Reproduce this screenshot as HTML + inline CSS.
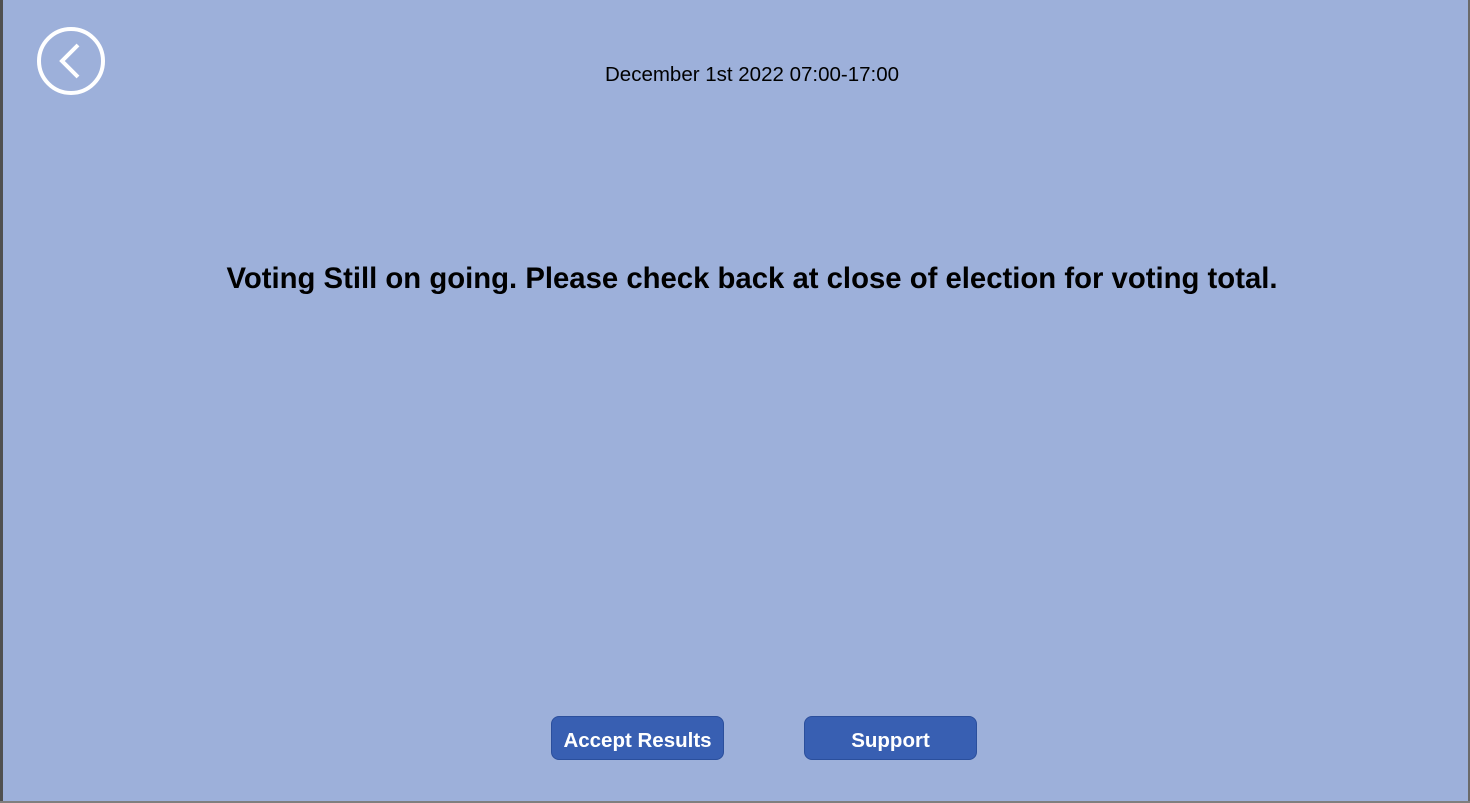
<!DOCTYPE html>
<html><head><style>
html,body{margin:0;padding:0}
body{width:1470px;height:803px;background:#9db0da;position:relative;overflow:hidden;font-family:"Liberation Sans",sans-serif}
.lb{position:absolute;left:0;top:0;width:3px;height:803px;background:#505050}
.rb{position:absolute;right:0;top:0;width:2px;height:803px;background:#6a6a6a}
.bb{position:absolute;left:0;bottom:0;width:1470px;height:2px;background:#7f7f7f}
.date{position:absolute;left:0;width:1504px;top:63px;text-align:center;font-size:20.5px;color:#000}
.msg{position:absolute;left:0;width:1504px;top:262px;text-align:center;font-size:29.3px;font-weight:bold;color:#000}
.btn{position:absolute;top:716px;width:171px;height:42px;background:#385fb2;border:1px solid #2b4f9c;border-radius:8px;color:#fff;font-weight:bold;font-size:20.5px;text-align:center;line-height:48px}
</style></head><body>
<div class="lb"></div><div class="rb"></div><div class="bb"></div>
<svg style="position:absolute;left:0;top:0" width="140" height="120"><circle cx="71" cy="61" r="32" fill="none" stroke="#fff" stroke-width="4"/><polyline points="78,45 62,61 78,77" fill="none" stroke="#fff" stroke-width="4"/></svg>
<div class="date">December 1st 2022 07:00-17:00</div>
<div class="msg">Voting Still on going. Please check back at close of election for voting total.</div>
<div class="btn" style="left:551px">Accept Results</div>
<div class="btn" style="left:804px">Support</div>
</body></html>
